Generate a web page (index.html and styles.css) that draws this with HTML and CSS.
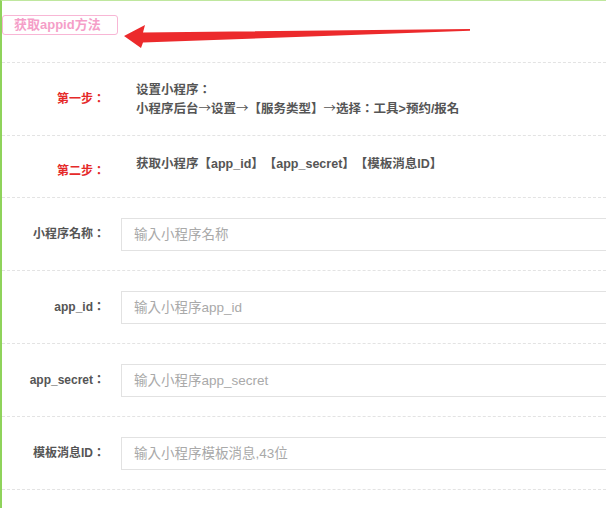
FILE: index.html
```html
<!DOCTYPE html>
<html>
<head>
<meta charset="utf-8">
<title>获取appid方法</title>
<link rel="stylesheet" href="styles.css">
</head>
<body>
<div class="page">
  <div class="head">
    <span class="tip-btn">获取appid方法</span>
    <svg class="arrow" width="604" height="61" viewBox="0 0 604 61" aria-hidden="true">
      <polygon points="122,35 143,24 141,31.5 468,28 468,29.8 141,41.5 139,47" fill="#ec2a2c"/>
    </svg>
  </div>
  <div class="row step step-one">
    <div class="label red">第一步：</div>
    <div class="desc">
      <p>设置小程序：</p>
      <p>小程序后台<span class="arr">→</span>设置<span class="arr">→</span>【服务类型】<span class="arr">→</span>选择：工具&gt;预约/报名</p>
    </div>
  </div>
  <div class="row step step-two">
    <div class="label red low">第二步：</div>
    <div class="desc high">
      <p>获取小程序【app_id】【app_secret】【模板消息ID】</p>
    </div>
  </div>
  <div class="row field">
    <div class="label">小程序名称：</div>
    <input class="input" type="text" placeholder="输入小程序名称">
  </div>
  <div class="row field">
    <div class="label">app_id：</div>
    <input class="input" type="text" placeholder="输入小程序app_id">
  </div>
  <div class="row field">
    <div class="label">app_secret：</div>
    <input class="input" type="text" placeholder="输入小程序app_secret">
  </div>
  <div class="row field">
    <div class="label">模板消息ID：</div>
    <input class="input" type="text" placeholder="输入小程序模板消息,43位">
  </div>
  <div class="row tail"></div>
</div>
</body>
</html>
```
FILE: styles.css
```css
html, body {
  margin: 0;
  padding: 0;
  background: #fff;
  overflow: hidden;
}
body {
  font-family: "Liberation Sans", "Noto Sans CJK TC", "Noto Sans CJK SC", sans-serif;
  color: #555;
  text-spacing-trim: space-all;
}
.page {
  border-left: 2px solid #8fd35b;
  border-top: 1px solid #bfe79e;
  min-height: 507px;
}
.head {
  position: relative;
  height: 61px;
  padding-top: 14px;
  box-sizing: border-box;
}
.tip-btn {
  display: inline-flex;
  align-items: center;
  box-sizing: border-box;
  width: 116px;
  height: 20px;
  padding-left: 11px;
  border: 1px solid #f8b6d5;
  border-radius: 3px;
  color: #f59ec8;
  font-size: 13px;
  font-weight: bold;
  line-height: 18px;
}
.arrow {
  position: absolute;
  left: 0;
  top: 0;
}
.row {
  display: flex;
  align-items: center;
  box-sizing: border-box;
  border-top: 1px dashed #e3e3e3;
}
.step-one { height: 73px; }
.step-two { height: 62px; }
.field { height: 73px; }
.tail { height: 20px; }
.label {
  flex: none;
  width: 103px;
  text-align: right;
  font-size: 12px;
  font-weight: bold;
  line-height: 18px;
  color: #555;
}
.label.red { color: #e52a2a; }
.low { margin-top: 8px; }
.high { margin-bottom: 6px; }
.desc {
  margin-left: 31px;
  font-size: 12.5px;
  font-weight: bold;
  line-height: 18px;
  color: #555;
}
.desc p { margin: 0; }
.arr {
  font-family: "Noto Sans CJK TC", sans-serif;
  font-weight: normal;
}
.input {
  flex: none;
  margin-left: 16px;
  width: 500px;
  height: 33px;
  box-sizing: border-box;
  border: 1px solid #e2e2e2;
  border-radius: 0;
  padding: 0 12px;
  font-family: "Liberation Sans", "Noto Sans CJK TC", "Noto Sans CJK SC", sans-serif;
  font-size: 13.5px;
  color: #555;
  background: #fff;
  outline: none;
}
.input::placeholder { color: #a9a9a9; }
```
